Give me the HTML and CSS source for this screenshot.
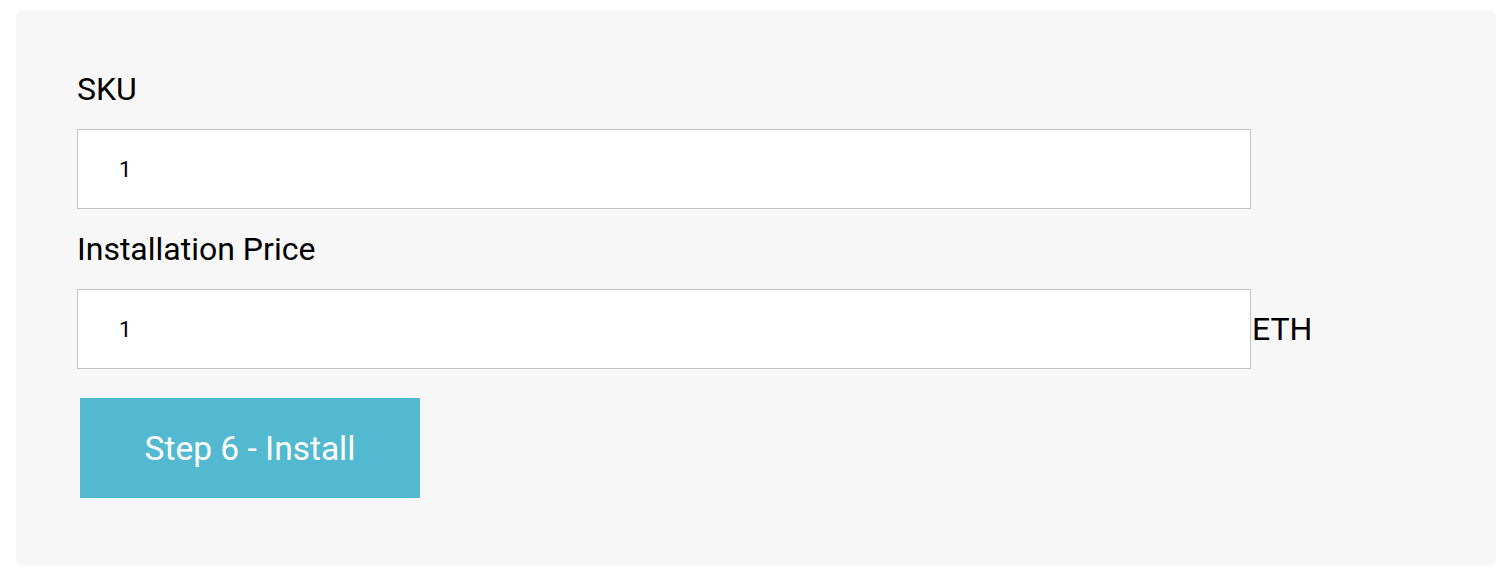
FILE: index.html
```html
<!DOCTYPE html>
<html>
<head>
<meta charset="utf-8">
<link rel="stylesheet" href="styles.css">
</head>
<body>
<div class="panel">
  <div class="field">
    <label class="label">SKU</label>
    <div class="row"><input class="input" type="text" value="1"></div>
  </div>
  <div class="field">
    <label class="label">Installation Price</label>
    <div class="row"><input class="input" type="text" value="1"><span class="unit">ETH</span></div>
  </div>
  <button class="btn">Step 6 - Install</button>
</div>
</body>
</html>
```
FILE: styles.css
```css
html, body {
  margin: 0;
  padding: 0;
  background: #ffffff;
  font-family: Roboto, "Liberation Sans", sans-serif;
}
.panel {
  margin: 10px 0 0 16px;
  width: 1480px;
  height: 556px;
  box-sizing: border-box;
  background: #f7f7f7;
  border-radius: 7px;
  padding: 61px 0 0 61px;
  display: flex;
  flex-direction: column;
  align-items: flex-start;
}
.field {
  display: flex;
  flex-direction: column;
}
.label {
  font-size: 32px;
  line-height: 37px;
  color: #000;
  margin-bottom: 21px;
}
.row {
  display: flex;
  align-items: center;
  gap: 1px;
}
.input {
  width: 1174px;
  height: 80px;
  box-sizing: border-box;
  border: 1px solid #c3c3c3;
  background: #fff;
  padding: 0 0 0 41px;
  font-family: Roboto, "Liberation Sans", sans-serif;
  font-size: 22px;
  color: #000;
  outline: none;
  margin: 0 0 22px 0;
}
.unit {
  font-size: 32px;
  color: #000;
  margin-bottom: 22px;
}
.btn {
  margin: 7px 0 0 3px;
  width: 340px;
  height: 100px;
  background: #52b9d1;
  border: none;
  color: #fff;
  font-family: Roboto, "Liberation Sans", sans-serif;
  font-size: 33.5px;
  padding: 0;
}
```
